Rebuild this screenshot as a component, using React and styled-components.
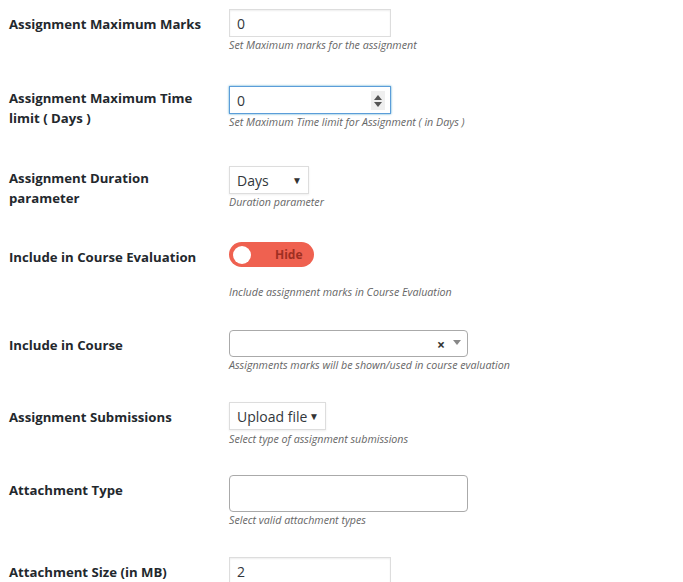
import React from 'react';
import styled, { createGlobalStyle } from 'styled-components';

const GlobalStyle = createGlobalStyle`
  body {
    margin: 0;
    background: #fff;
    font-family: "Open Sans", "Liberation Sans", sans-serif;
    color: #23282d;
  }
`

const Page = styled.div`
  padding: 9px 0 0 9px;
  height: 582px;
  overflow: hidden;
  box-sizing: border-box;
`

const Row = styled.div`
  display: flex;
  align-items: flex-start;
  margin-top: ${p => p.$space || 0}px;
`

const Label = styled.div`
  width: 200px;
  margin-right: 20px;
  padding-top: ${p => p.$two ? 2 : 5}px;
  font-size: 13.2px;
  font-weight: 700;
  line-height: 20px;
  color: #23282d;
`

const Field = styled.div`
  display: flex;
  flex-direction: column;
  align-items: flex-start;
`

const Desc = styled.div`
  margin-top: ${p => p.$gap || 1}px;
  font-size: 10.7px;
  font-style: italic;
  line-height: 14px;
  color: #666;
  white-space: nowrap;
`

const TextBox = styled.div`
  position: relative;
  width: 162px;
  height: 28px;
  box-sizing: border-box;
  border: 1px solid ${p => p.$focus ? '#5b9dd9' : '#ddd'};
  box-shadow: ${p => p.$focus ? '0 0 2px rgba(30,140,190,.8)' : 'inset 0 1px 2px rgba(0,0,0,.07)'};
  padding: 0 7px;
  display: flex;
  align-items: center;
  font-size: 14px;
  color: #32373c;
  background: #fff;
`

const Spinner = styled.div`
  position: absolute;
  right: 5px;
  top: 4px;
  width: 14px;
  height: 19px;
  background: #efefef;
  display: flex;
  flex-direction: column;
  align-items: center;
  justify-content: center;
  gap: 2px;
`

const Tri = styled.span`
  width: 0;
  height: 0;
  border-left: 4px solid transparent;
  border-right: 4px solid transparent;
  ${p => p.$up ? 'border-bottom: 5px solid #555;' : 'border-top: 5px solid #555;'}
`

const Select = styled.div`
  width: ${p => p.$w}px;
  height: 28px;
  box-sizing: border-box;
  border: 1px solid #ddd;
  box-shadow: 0 1px 2px rgba(0,0,0,.07);
  padding: 0 6px 0 7px;
  display: flex;
  align-items: center;
  justify-content: space-between;
  font-size: 14px;
  color: #32373c;
  background: #fff;
`

const Caret = styled.span`
  font-size: 10px;
  color: #333;
`

const Toggle = styled.div`
  width: 85px;
  height: 25px;
  border-radius: 13px;
  background: #ef6150;
  display: flex;
  align-items: center;
  padding: 0 4px;
  box-sizing: border-box;
`

const Knob = styled.span`
  width: 18px;
  height: 18px;
  border-radius: 50%;
  background: #fff;
`

const ToggleText = styled.span`
  margin-left: 24px;
  font-size: 12px;
  font-weight: 700;
  color: #9e2f22;
`

const Select2 = styled.div`
  width: 239px;
  height: ${p => p.$h || 27}px;
  box-sizing: border-box;
  border: 1px solid #aaa;
  border-radius: 4px;
  background: #fff;
  display: flex;
  align-items: center;
  justify-content: flex-end;
  padding-right: 6px;
  gap: 8px;
`

const Clear = styled.span`
  font-size: 14px;
  font-weight: 700;
  color: #333;
  line-height: 1;
  margin-top: 3px;
`

const Arrow = styled.span`
  width: 0;
  height: 0;
  border-left: 4px solid transparent;
  border-right: 4px solid transparent;
  border-top: 5px solid #888;
  margin-top: -2px;
`

const App = () => {
  return (
    <>
      <GlobalStyle />
      <Page>
        <Row>
          <Label>Assignment Maximum Marks</Label>
          <Field>
            <TextBox>0</TextBox>
            <Desc>Set Maximum marks for the assignment</Desc>
          </Field>
        </Row>

        <Row $space={34}>
          <Label $two>Assignment Maximum Time limit ( Days )</Label>
          <Field>
            <TextBox $focus>
              0
              <Spinner>
                <Tri $up />
                <Tri />
              </Spinner>
            </TextBox>
            <Desc>Set Maximum Time limit for Assignment ( in Days )</Desc>
          </Field>
        </Row>

        <Row $space={37}>
          <Label $two>Assignment Duration parameter</Label>
          <Field>
            <Select $w={80}>Days<Caret>▼</Caret></Select>
            <Desc>Duration parameter</Desc>
          </Field>
        </Row>

        <Row $space={33}>
          <Label>Include in Course Evaluation</Label>
          <Field>
            <Toggle>
              <Knob />
              <ToggleText>Hide</ToggleText>
            </Toggle>
            <Desc $gap={18}>Include assignment marks in Course Evaluation</Desc>
          </Field>
        </Row>

        <Row $space={31}>
          <Label>Include in Course</Label>
          <Field>
            <Select2>
              <Clear>×</Clear>
              <Arrow />
            </Select2>
            <Desc>Assignments marks will be shown/used in course evaluation</Desc>
          </Field>
        </Row>

        <Row $space={30}>
          <Label>Assignment Submissions</Label>
          <Field>
            <Select $w={97}>Upload file<Caret>▼</Caret></Select>
            <Desc $gap={2}>Select type of assignment submissions</Desc>
          </Field>
        </Row>

        <Row $space={29}>
          <Label>Attachment Type</Label>
          <Field>
            <Select2 $h={37} />
            <Desc>Select valid attachment types</Desc>
          </Field>
        </Row>

        <Row $space={30}>
          <Label>Attachment Size (in MB)</Label>
          <Field>
            <TextBox>2</TextBox>
          </Field>
        </Row>
      </Page>
    </>
  )
}

export default App
